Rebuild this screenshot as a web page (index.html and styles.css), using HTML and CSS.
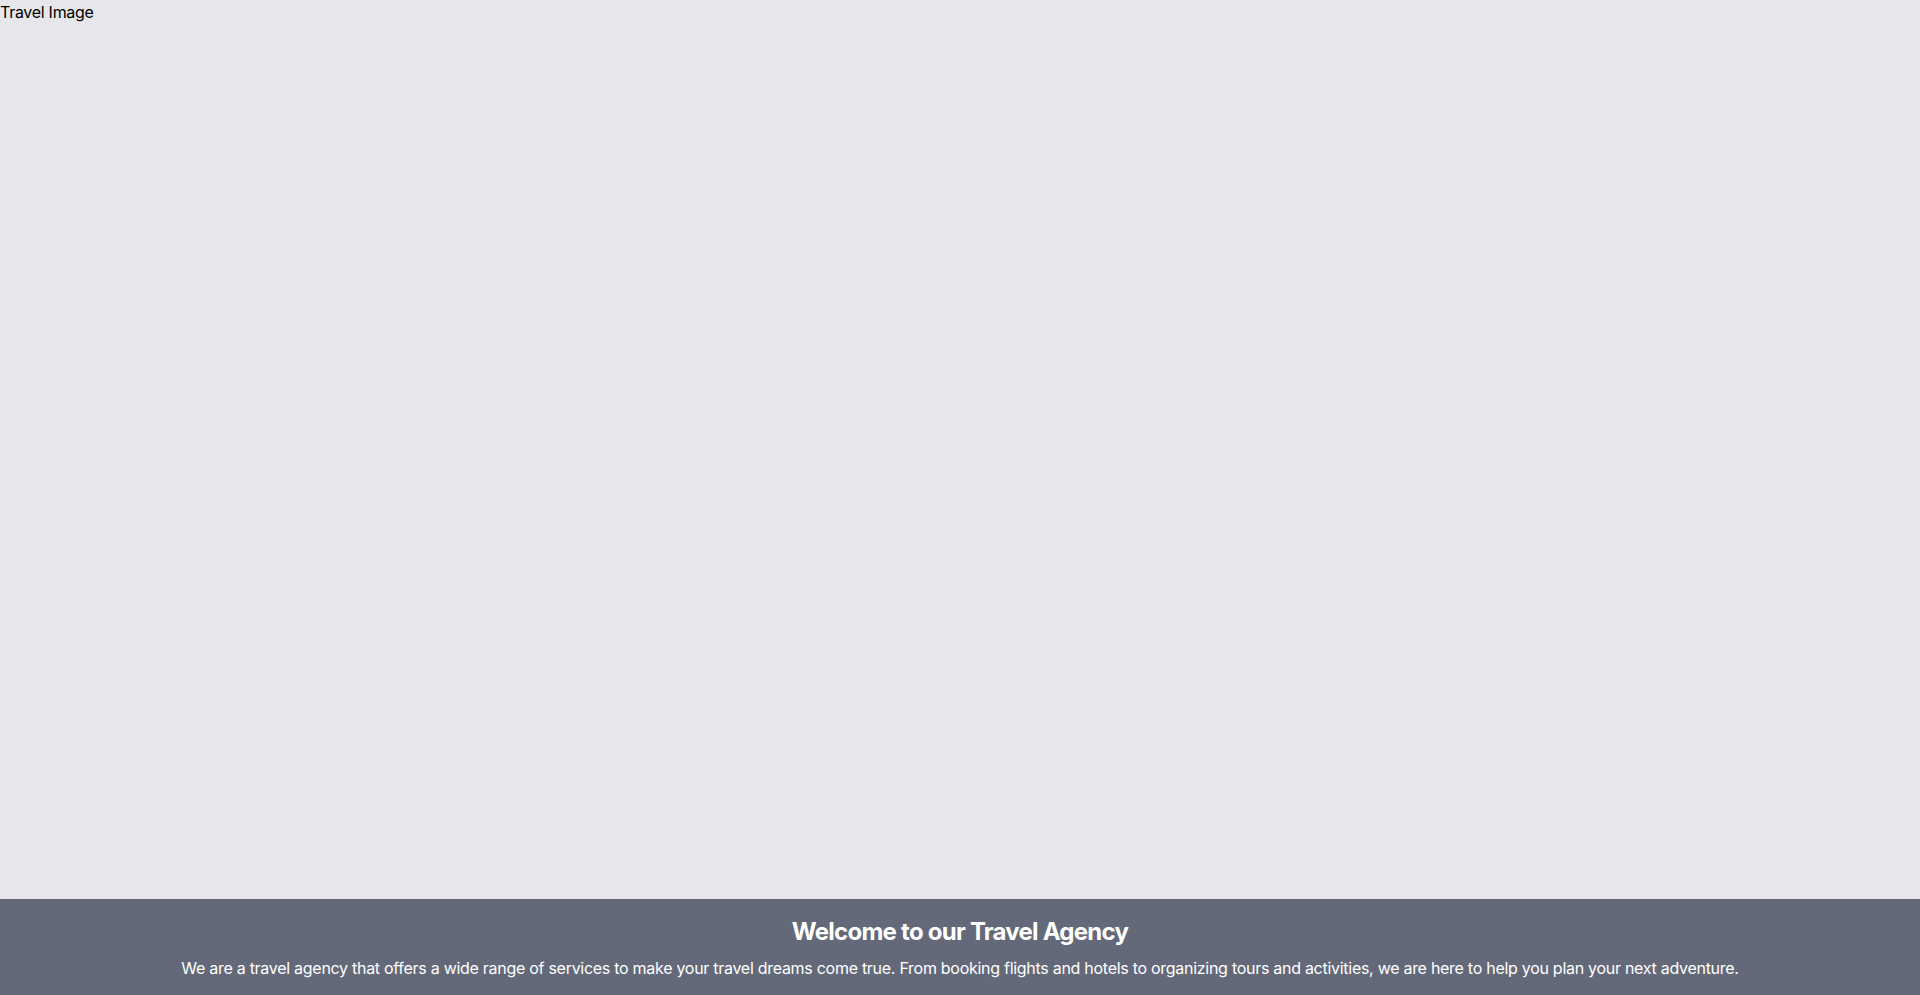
FILE: index.html
```html
<!DOCTYPE html>
<html lang="en">
<head>
<meta charset="utf-8">
<title>Travel Agency</title>
<link rel="stylesheet" href="styles.css">
</head>
<body>
<div class="page">
  <div class="hero">Travel Image</div>
  <footer class="intro">
    <h2 class="intro-title">Welcome to our Travel Agency</h2>
    <p class="intro-text">We are a travel agency that offers a wide range of services to make your travel dreams come true. From booking flights and hotels to organizing tours and activities, we are here to help you plan your next adventure.</p>
  </footer>
</div>
</body>
</html>
```

FILE: styles.css
```css
html, body {
  margin: 0;
  padding: 0;
  height: 100%;
}
body {
  font-family: Inter, "Liberation Sans", sans-serif;
  font-size: 16px;
  line-height: 24px;
  letter-spacing: -0.28px;
  color: #000;
}
.page {
  display: flex;
  flex-direction: column;
  height: 995px;
}
.hero {
  flex: 1;
  background: #e5e7eb;
}
.intro {
  background: #636978;
  color: #fff;
  text-align: center;
  padding: 17px 16px 15px;
}
.intro-title {
  margin: 0 0 8px;
  font-size: 24px;
  line-height: 32px;
  font-weight: 700;
  letter-spacing: -0.75px;
}
.intro-text {
  margin: 0;
  font-size: 16px;
  line-height: 24px;
}
```
